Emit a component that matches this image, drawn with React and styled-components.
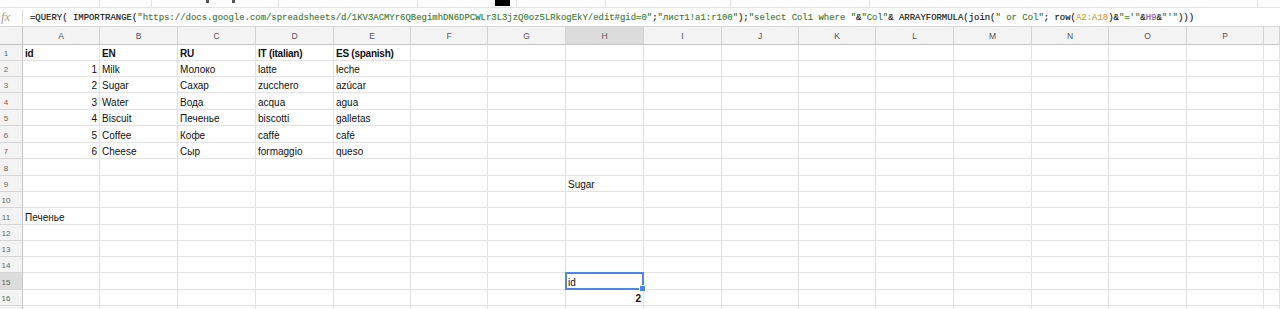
import React from 'react';
import styled, { createGlobalStyle } from 'styled-components';

const Global = createGlobalStyle`
  html, body { margin: 0; padding: 0; background: #fff; }
  body { width: 1280px; height: 309px; overflow: hidden; }
`;

const Page = styled.div`
  width: 1280px;
  height: 309px;
  overflow: hidden;
  display: flex;
  flex-direction: column;
  font-family: Arial, "Liberation Sans", sans-serif;
  background: #fff;
`;

const TopStrip = styled.div`
  height: 8px;
  flex: none;
  display: flex;
  border-bottom: 1px solid #e3e3e3;
  box-sizing: border-box;
`;

const StripSeg = styled.div`
  width: ${(p) => p.$w}px;
  flex: none;
  border-right: ${(p) => (p.$last ? 'none' : '1px solid #e3e3e3')};
  box-sizing: border-box;
  position: relative;
`;

const Mark = styled.div`
  position: absolute;
  top: 0;
  left: ${(p) => p.$x}px;
  width: ${(p) => p.$w}px;
  height: ${(p) => p.$h}px;
  background: ${(p) => p.$c};
`;

const FormulaBar = styled.div`
  height: 19px;
  flex: none;
  display: flex;
  align-items: center;
  box-sizing: border-box;
  border-bottom: 1px solid #d6d6d6;
`;

const FxLabel = styled.div`
  width: 22px;
  flex: none;
  font-family: "Liberation Serif", serif;
  font-style: italic;
  font-size: 13px;
  color: #a0a0a0;
  padding-left: 1px;
  box-sizing: border-box;
  line-height: 18px;
`;

const FxDivider = styled.div`
  width: 1px;
  height: 14px;
  background: #dcdcdc;
  flex: none;
  margin-right: 7px;
`;

const FormulaText = styled.div`
  font-family: "Liberation Mono", monospace;
  font-size: 8.95px;
  white-space: pre;
  color: #111;
  line-height: 18px;
  padding-top: 1px;
  -webkit-text-stroke: 0.15px currentColor;
`;

const Tok = styled.span`
  color: ${(p) => p.$c};
`;

const Grid = styled.div`
  flex: none;
  display: grid;
  grid-template-columns: 23px 77px 78px 78px 78px 77px 77px 78px 78px 78px 77px 77px 78px 78px 77px 78px 77px 16px;
  grid-template-rows: 18px 16px 16px 16px 17px 16px 17px 16px 17px 16px 16px 17px 16px 16px 16px 17px 16px 16px;
`;

const Corner = styled.div`
  background: #f3f3f3;
  border-right: 1px solid #c4c4c4;
  border-bottom: 1px solid #c4c4c4;
  box-sizing: border-box;
`;

const ColHead = styled.div`
  background: ${(p) => (p.$active ? '#dcdcdc' : '#f3f3f3')};
  border-right: 1px solid #d2d2d2;
  border-bottom: 1px solid #c4c4c4;
  box-sizing: border-box;
  display: flex;
  align-items: center;
  justify-content: center;
  font-size: 8.5px;
  color: #555;
`;

const RowHead = styled.div`
  background: ${(p) => (p.$active ? '#dcdcdc' : '#f3f3f3')};
  border-right: 1px solid #c4c4c4;
  border-bottom: 1px solid #d6d6d6;
  box-sizing: border-box;
  display: flex;
  align-items: flex-end;
  justify-content: center;
  padding-right: 10px;
  padding-bottom: 1px;
  font-size: 8px;
  line-height: 10px;
  color: #666;
`;

const Cell = styled.div`
  border-right: 1px solid #e2e2e2;
  border-bottom: 1px solid #e2e2e2;
  box-sizing: border-box;
  display: flex;
  align-items: flex-end;
  justify-content: ${(p) => (p.$num ? 'flex-end' : 'flex-start')};
  padding: 0 2px 1px 2px;
  font-size: 10px;
  line-height: 11px;
  color: #111;
  font-weight: ${(p) => (p.$bold ? 700 : 400)};
  letter-spacing: ${(p) => (p.$bold && !p.$num ? '-0.25px' : '0')};
  white-space: nowrap;
  overflow: visible;
  position: relative;
  z-index: ${(p) => (p.$selected ? 2 : 0)};

  ${(p) =>
    p.$selected &&
    `
    &::before {
      content: '';
      position: absolute;
      left: -1px;
      top: -1px;
      right: -1px;
      bottom: -1px;
      border: 2px solid #4a86e8;
      pointer-events: none;
    }
    &::after {
      content: '';
      position: absolute;
      right: -3px;
      bottom: -3px;
      width: 5px;
      height: 5px;
      background: #4a86e8;
      border: 1px solid #fff;
    }
  `}
`;

const GREEN = '#3b8030';
const ORANGE = '#e59a2a';
const PURPLE = '#8b4c9e';
const BLACK = '#111';

const formula = [
  ['=QUERY( IMPORTRANGE(', BLACK],
  ['"https://docs.google.com/spreadsheets/d/1KV3ACMYr6QBegimhDN6DPCWLr3L3jzQ0oz5LRkogEkY/edit#gid=0"', GREEN],
  [';', BLACK],
  ['"лист1!a1:r100"', GREEN],
  [');', BLACK],
  ['"select Col1 where "', GREEN],
  ['&', BLACK],
  ['"Col"', GREEN],
  ['& ARRAYFORMULA(join(', BLACK],
  ['" or Col"', GREEN],
  ['; row(', BLACK],
  ['A2:A18', ORANGE],
  [')&', BLACK],
  ['"=\'"', GREEN],
  ['&', BLACK],
  ['H9', PURPLE],
  ['&', BLACK],
  ['"\'"', GREEN],
  [')))', BLACK],
];

const strip = [
  { w: 100 },
  { w: 52 },
  { w: 127, marks: [{ x: 54, w: 3, h: 3, c: '#555' }, { x: 80, w: 3, h: 3, c: '#555' }] },
  { w: 139 },
  { w: 99, marks: [{ x: 77, w: 15, h: 6, c: '#000' }] },
  { w: 89 },
  { w: 125 },
  { w: 139 },
  { w: 388 },
  { w: 22, last: true },
];

const cols = ['A', 'B', 'C', 'D', 'E', 'F', 'G', 'H', 'I', 'J', 'K', 'L', 'M', 'N', 'O', 'P', ''];
const NROWS = 17;
const VISIBLE_NUMBERED = 16;

const data = {
  1: { 0: { t: 'id', b: 1 }, 1: { t: 'EN', b: 1 }, 2: { t: 'RU', b: 1 }, 3: { t: 'IT (italian)', b: 1 }, 4: { t: 'ES (spanish)', b: 1 } },
  2: { 0: { t: '1', n: 1 }, 1: { t: 'Milk' }, 2: { t: 'Молоко' }, 3: { t: 'latte' }, 4: { t: 'leche' } },
  3: { 0: { t: '2', n: 1 }, 1: { t: 'Sugar' }, 2: { t: 'Сахар' }, 3: { t: 'zucchero' }, 4: { t: 'azúcar' } },
  4: { 0: { t: '3', n: 1 }, 1: { t: 'Water' }, 2: { t: 'Вода' }, 3: { t: 'acqua' }, 4: { t: 'agua' } },
  5: { 0: { t: '4', n: 1 }, 1: { t: 'Biscuit' }, 2: { t: 'Печенье' }, 3: { t: 'biscotti' }, 4: { t: 'galletas' } },
  6: { 0: { t: '5', n: 1 }, 1: { t: 'Coffee' }, 2: { t: 'Кофе' }, 3: { t: 'caffè' }, 4: { t: 'café' } },
  7: { 0: { t: '6', n: 1 }, 1: { t: 'Cheese' }, 2: { t: 'Сыр' }, 3: { t: 'formaggio' }, 4: { t: 'queso' } },
  9: { 7: { t: 'Sugar' } },
  11: { 0: { t: 'Печенье' } },
  15: { 7: { t: 'id', s: 1 } },
  16: { 7: { t: '2', n: 1, b: 1 } },
};

export default function App() {
  const cells = [];
  cells.push(<Corner key="corner" />);
  cols.forEach((c, i) => cells.push(<ColHead key={'h' + i} $active={c === 'H'}>{c}</ColHead>));
  for (let r = 1; r <= NROWS; r++) {
    cells.push(
      <RowHead key={'r' + r} $active={r === 15}>
        {r <= VISIBLE_NUMBERED ? r : ''}
      </RowHead>
    );
    cols.forEach((c, i) => {
      const d = (data[r] && data[r][i]) || null;
      cells.push(
        <Cell key={r + '-' + i} $num={d && d.n} $bold={d && d.b} $selected={d && d.s}>
          {d ? d.t : ''}
        </Cell>
      );
    });
  }

  return (
    <>
      <Global />
      <Page>
        <TopStrip>
          {strip.map((s, i) => (
            <StripSeg key={i} $w={s.w} $last={s.last}>
              {(s.marks || []).map((m, j) => (
                <Mark key={j} $x={m.x} $w={m.w} $h={m.h} $c={m.c} />
              ))}
            </StripSeg>
          ))}
        </TopStrip>
        <FormulaBar>
          <FxLabel>fx</FxLabel>
          <FxDivider />
          <FormulaText>
            {formula.map(([t, c], i) => (
              <Tok key={i} $c={c}>
                {t}
              </Tok>
            ))}
          </FormulaText>
        </FormulaBar>
        <Grid>{cells}</Grid>
      </Page>
    </>
  );
}
